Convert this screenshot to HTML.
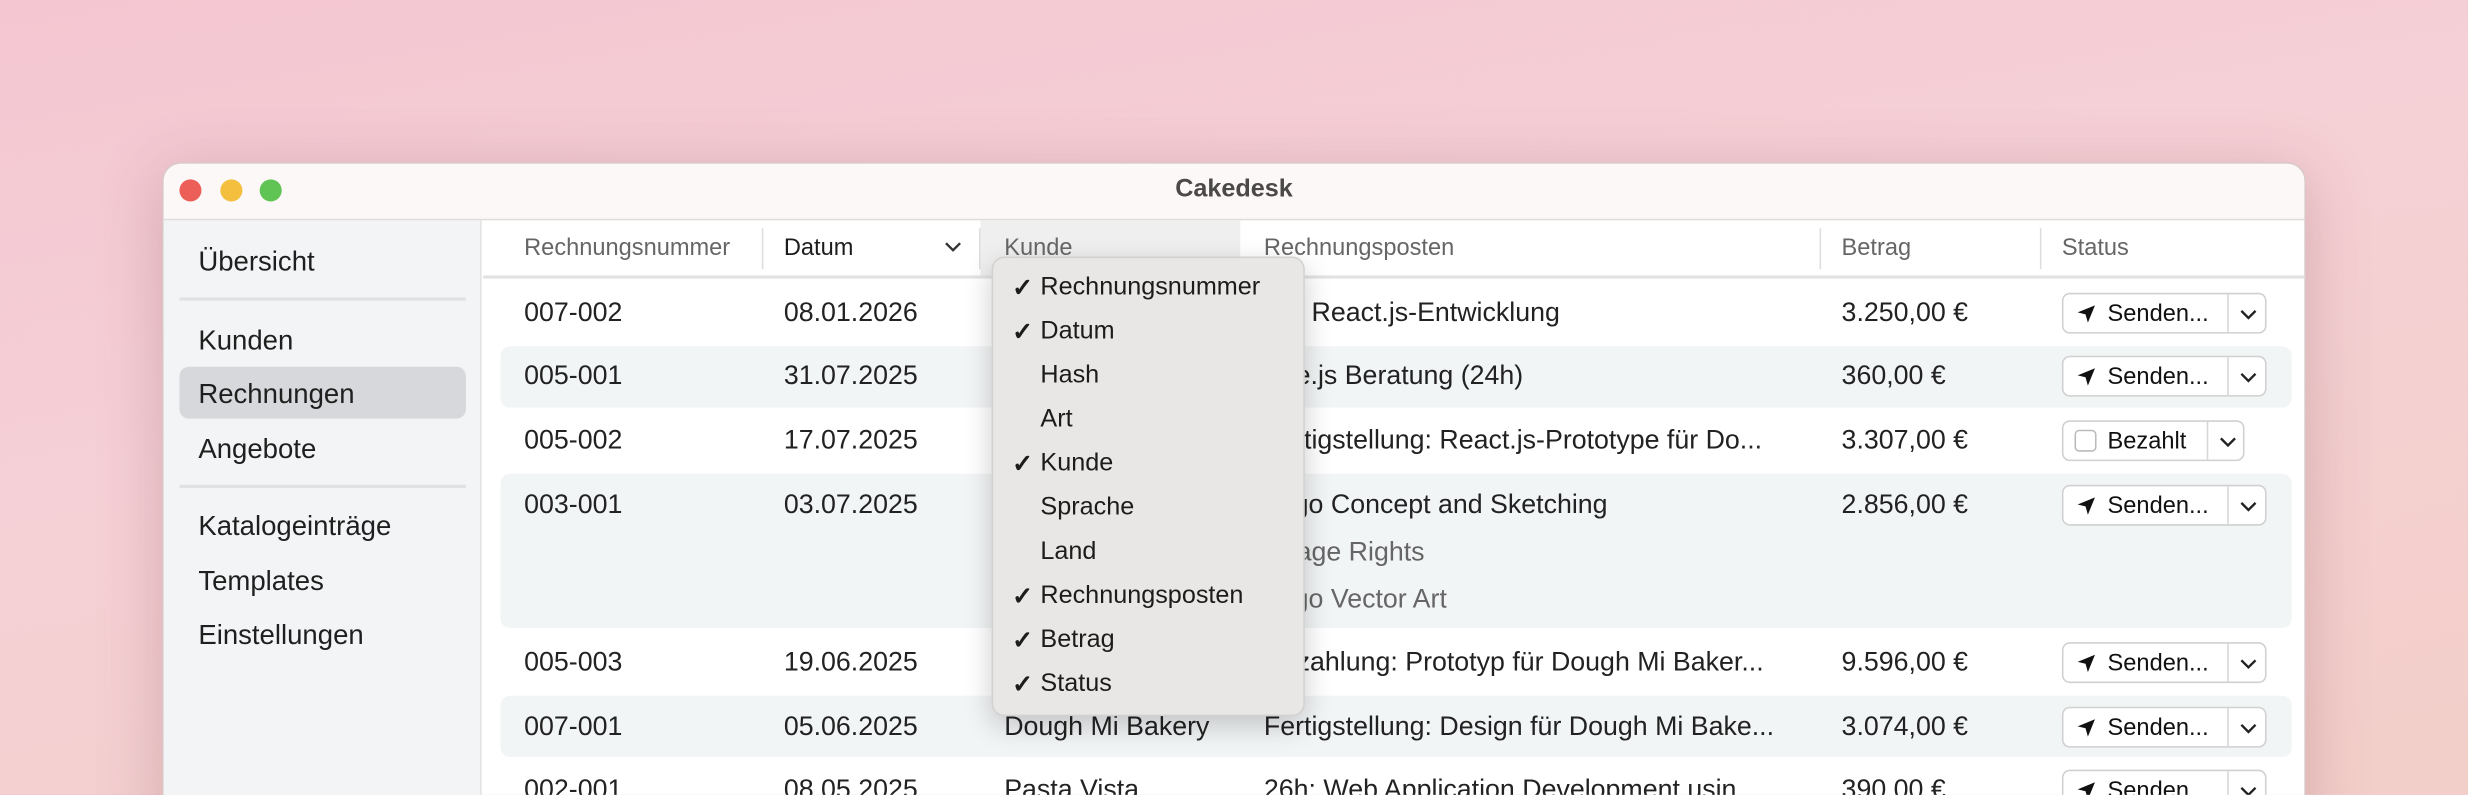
<!DOCTYPE html>
<html><head><meta charset="utf-8"><style>
*{box-sizing:border-box;margin:0;padding:0}
html,body{width:2468px;height:794px;overflow:hidden}
body{background:linear-gradient(170deg,#f4c6d1 0%,#f5d0d6 40%,#f3cfc9 100%);font-family:"Liberation Sans",sans-serif}
#s{position:absolute;left:0;top:0;width:1568px;height:505px;transform:scale(1.57398);transform-origin:0 0;overflow:hidden}
.win{position:absolute;left:103px;top:103px;width:1362px;height:480px;background:#fff;border-radius:12px;overflow:hidden;box-shadow:0 8px 40px rgba(120,60,70,.25);border:1px solid #d9c9c9}
.tb{position:absolute;left:0;top:0;right:0;height:36px;background:#fcf8f7;border-bottom:1px solid #e2dcdc}
.tb .t{position:absolute;left:0;right:0;top:8px;text-align:center;font-weight:bold;font-size:16px;color:#4b4848}
.dot{position:absolute;top:10px;width:14px;height:14px;border-radius:50%}
.sb{position:absolute;left:0;top:36px;width:202px;bottom:0;background:#f2f4f5;border-right:1px solid #e3e3e3}
.si{position:absolute;left:22px;font-size:17.5px;color:#1f1f1f}
.sep{position:absolute;left:10px;width:182px;height:2px;background:#dfe2e4}
.sel{position:absolute;left:10px;top:93px;width:182px;height:33px;background:#d6d8db;border-radius:6px}
.hd{position:absolute;top:36px;left:203px;right:0;height:37px;border-bottom:2px solid #e2e2e2;font-size:15px;color:#666}
.hd span{position:absolute;top:9px;white-space:nowrap}
.vs{position:absolute;top:5px;width:1px;height:26px;background:#dedede}
.rw{position:absolute;left:214px;width:1138px;border-radius:6px}
.c{position:absolute;font-size:17px;color:#222;white-space:nowrap;overflow:hidden}
.g{color:#666}
.btn{position:absolute;height:26px;border:1px solid #d0d0d0;border-radius:5px;background:#fff;font-size:15px;color:#111}
.btn .l{position:absolute;left:28px;top:4px}
.btn .d{position:absolute;top:0;bottom:0;width:1px;background:#d6d6d6}
.menu{position:absolute;left:630px;top:163px;width:199px;height:292px;background:#e8e7e5;border-radius:8px;border:1px solid #d3d2d0;box-shadow:0 6px 18px rgba(0,0,0,.2)}
.mi{position:absolute;left:30px;font-size:16px;color:#1c1c1c}
.ck{position:absolute;left:12px;font-size:16px;color:#1c1c1c;font-weight:bold}
</style></head><body><div id="s">
<div class="win">
 <div class="tb"><div class="dot" style="left:10px;background:#ec5f58"></div><div class="dot" style="left:36px;background:#f4be3e"></div><div class="dot" style="left:61px;background:#5fc454"></div><div class="t">Cakedesk</div></div>
 <div class="sb">
  <div class="sel"></div>
  <div class="si" style="top:16px">Übersicht</div>
  <div class="sep" style="top:49px"></div>
  <div class="si" style="top:66px">Kunden</div>
  <div class="si" style="top:100px">Rechnungen</div>
  <div class="si" style="top:135px">Angebote</div>
  <div class="sep" style="top:168px"></div>
  <div class="si" style="top:184px">Katalogeinträge</div>
  <div class="si" style="top:219px">Templates</div>
  <div class="si" style="top:253px">Einstellungen</div>
 </div>
 <div class="hd">
  <div style="position:absolute;left:316px;width:165px;top:0;bottom:0;background:#efefef"></div>
  <span style="left:26px">Rechnungsnummer</span><div class="vs" style="left:177px"></div>
  <span style="left:191px;color:#1c1c1c">Datum</span>
  <svg style="position:absolute;left:293px;top:13px" width="11" height="8" viewBox="0 0 11 8"><path d="M1 1.5l4.5 4.5 4.5-4.5" fill="none" stroke="#333" stroke-width="1.5"/></svg>
  <div class="vs" style="left:315px"></div>
  <span style="left:331px">Kunde</span>
  <span style="left:496px">Rechnungsposten</span><div class="vs" style="left:849px"></div>
  <span style="left:863px">Betrag</span><div class="vs" style="left:989px"></div>
  <span style="left:1003px">Status</span>
 </div>
 <div class="rw" style="top:116px;height:39px;background:#f2f5f6"></div>
 <div class="rw" style="top:197px;height:98px;background:#f2f5f6"></div>
 <div class="rw" style="top:338px;height:39px;background:#f2f5f6"></div>
 <div id="rows"></div>
</div>
<div class="menu">
 <div class="ck" style="top:9px">✓</div><div class="mi" style="top:10px">Rechnungsnummer</div>
 <div class="ck" style="top:37px">✓</div><div class="mi" style="top:38px">Datum</div>
 <div class="mi" style="top:66px">Hash</div>
 <div class="mi" style="top:94px">Art</div>
 <div class="ck" style="top:121px">✓</div><div class="mi" style="top:122px">Kunde</div>
 <div class="mi" style="top:150px">Sprache</div>
 <div class="mi" style="top:178px">Land</div>
 <div class="ck" style="top:205px">✓</div><div class="mi" style="top:206px">Rechnungsposten</div>
 <div class="ck" style="top:233px">✓</div><div class="mi" style="top:234px">Betrag</div>
 <div class="ck" style="top:261px">✓</div><div class="mi" style="top:262px">Status</div>
</div>
</div>
<script>
var R=[["007-002","08.01.2026","Pasta Vista","Vn: React.js-Entwicklung","3.250,00 €",198],
["005-001","31.07.2025","Dough Mi Bakery","Vue.js Beratung (24h)","360,00 €",238],
["005-002","17.07.2025","Dough Mi Bakery","Fertigstellung: React.js-Prototype für Do...","3.307,00 €",279,1],
["003-001","03.07.2025","Pasta Vista","Logo Concept and Sketching","2.856,00 €",320],
["005-003","19.06.2025","Dough Mi Bakery","Anzahlung: Prototyp für Dough Mi Baker...","9.596,00 €",420],
["007-001","05.06.2025","Dough Mi Bakery","Fertigstellung: Design für Dough Mi Bake...","3.074,00 €",461],
["002-001","08.05.2025","Pasta Vista","26h: Web Application Development usin...","390,00 €",501]];
var h="",W=103,T=103;
function c(x,y,t,cl,w){return '<div class="c '+(cl||'')+'" style="left:'+(x-W)+'px;top:'+(y-T-10)+'px'+(w?';width:'+w+'px':'')+'">'+t+'</div>';}
R.forEach(function(r){var y=r[5];
h+=c(332,y,r[0])+c(497,y,r[1])+c(637,y,r[2],'',145)+c(802,y,r[3],'',350)+c(1169,y,r[4]);
var bt=y-T-13;
if(r[6]){h+='<div class="btn" style="left:1206px;top:'+bt+'px;width:116px"><div style="position:absolute;left:7px;top:5px;width:14px;height:14px;border:1px solid #bbb;border-radius:3px"></div><span class="l" style="left:28px">Bezahlt</span><div class="d" style="left:91px"></div><svg style="position:absolute;left:99px;top:9px" width="11" height="8" viewBox="0 0 11 8"><path d="M1 1.5l4.5 4.5 4.5-4.5" fill="none" stroke="#222" stroke-width="1.5"/></svg></div>';}
else{h+='<div class="btn" style="left:1206px;top:'+bt+'px;width:130px"><svg style="position:absolute;left:8px;top:6px" width="13" height="13" viewBox="0 0 13 13"><path d="M12 1L1 5.5l5 1.2L7.5 12z" fill="#111"/></svg><span class="l">Senden...</span><div class="d" style="left:104px"></div><svg style="position:absolute;left:112px;top:9px" width="11" height="8" viewBox="0 0 11 8"><path d="M1 1.5l4.5 4.5 4.5-4.5" fill="none" stroke="#222" stroke-width="1.5"/></svg></div>';}
});
h+=c(802,350,"Usage Rights","g")+c(802,380,"Logo Vector Art","g");
document.getElementById("rows").innerHTML=h;
</script>
</div></body></html>
